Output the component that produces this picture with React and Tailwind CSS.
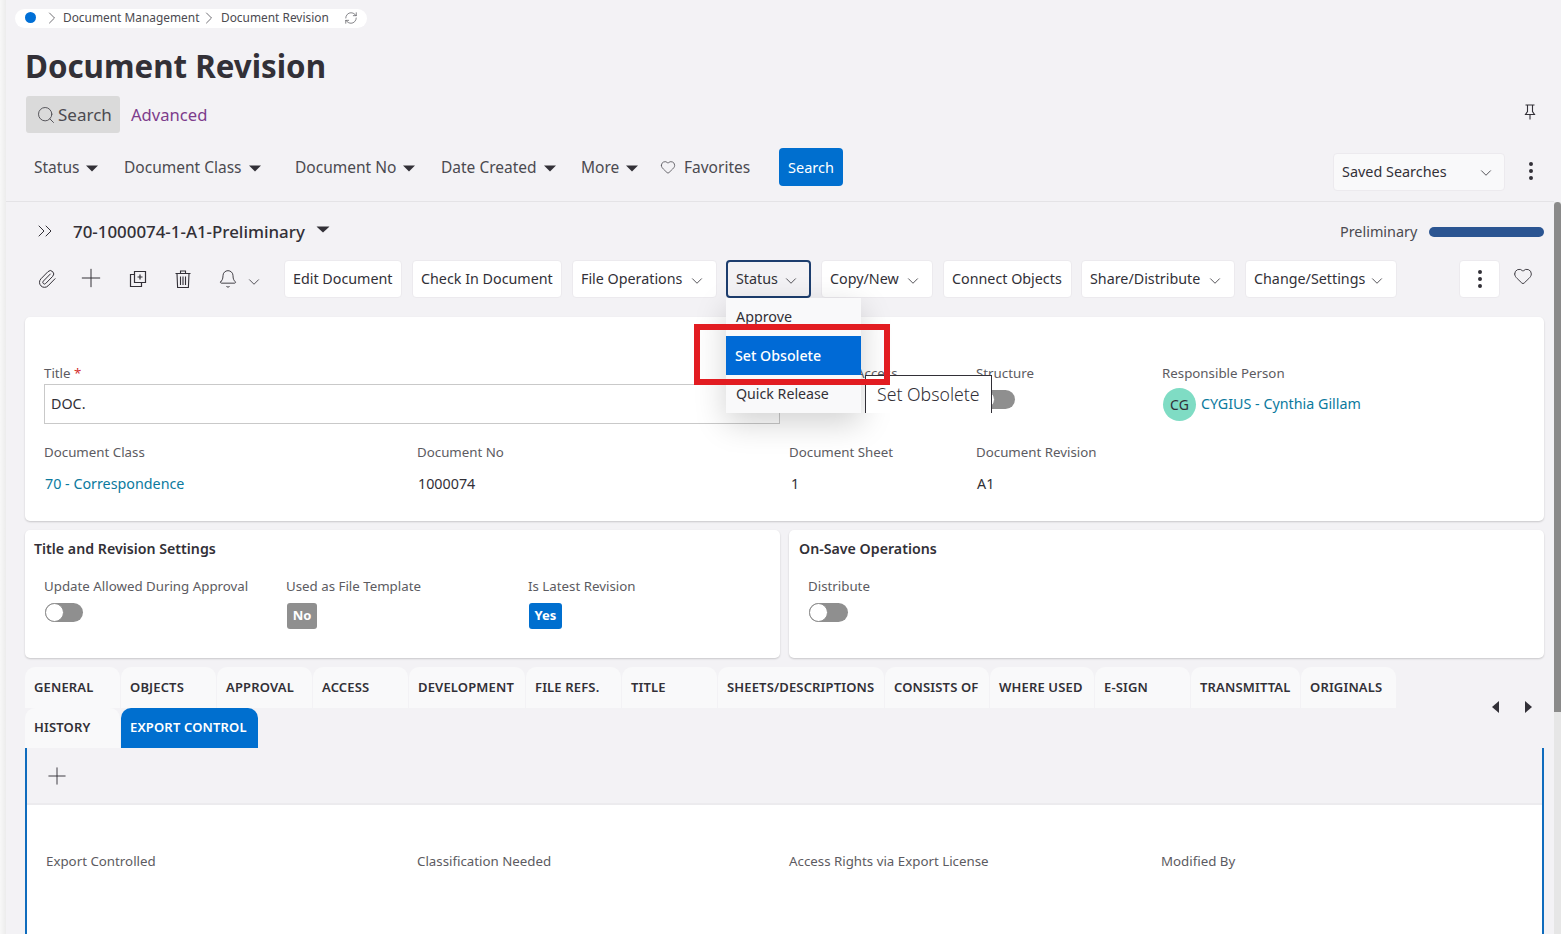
import React from "react";
import { ChevronDown, ChevronRight, Search, Plus, Paperclip, Bell, Heart, RefreshCw, ChevronsRight, MoreVertical } from "lucide-react";

const Caret = ({ className = "" }) => (
  <svg width="12" height="7" viewBox="0 0 12 7" className={className}><path d="M0 0.5h12L6 6.5z" fill="#323037" /></svg>
);

const FilterItem = ({ x, label }) => (
  <div className="absolute top-[157px] h-[22px] flex items-center gap-[7px] text-[15.5px] text-[#4b4a50] whitespace-nowrap" style={{ left: x }}>
    <span>{label}</span><Caret />
  </div>
);

const Btn = ({ x, w, label, chevron, active }) => (
  <div
    className={`absolute top-[260px] h-[38px] rounded-[4px] flex items-center text-[14.3px] text-[#323037] whitespace-nowrap ${active ? "bg-[#f3f2f5] border-2 border-[#1c3d6e] pl-[8px]" : "bg-white border border-[#eceaee] pl-[8px]"}`}
    style={{ left: x, width: w }}
  >
    <span>{label}</span>
    {chevron && <ChevronDown size={18} strokeWidth={1.1} className={`absolute text-[#323037] ${active ? "right-[9px] top-[10px]" : "right-[10px] top-[11px]"}`} />}
  </div>
);

const Label = ({ x, y, children }) => (
  <div className="absolute text-[13.3px] leading-[18px] text-[#5c5b61] whitespace-nowrap" style={{ left: x, top: y }}>{children}</div>
);

const Value = ({ x, y, children, link }) => (
  <div className={`absolute text-[14.3px] leading-[20px] whitespace-nowrap ${link ? "text-[#0b7a9e]" : "text-[#323037]"}`} style={{ left: x, top: y }}>{children}</div>
);

const Toggle = ({ x, y, w = 39 }) => (
  <div className="absolute h-[19px] rounded-full bg-[#8f8f8f]" style={{ left: x, top: y, width: w }}>
    <div className="absolute left-0 top-0 w-[19px] h-[19px] rounded-full bg-white border border-[#8f8f8f]" />
  </div>
);

const tabs1 = [
  [25, 95, "GENERAL"], [121, 95, "OBJECTS"], [217, 95, "APPROVAL"], [313, 95, "ACCESS"], [409, 116, "DEVELOPMENT"],
  [526, 95, "FILE REFS."], [622, 95, "TITLE"], [718, 166, "SHEETS/DESCRIPTIONS"], [885, 104, "CONSISTS OF"],
  [990, 104, "WHERE USED"], [1095, 95, "E-SIGN"], [1191, 109, "TRANSMITTAL"], [1301, 95, "ORIGINALS"],
];

const Tab = ({ x, w, y, h, label, active }) => (
  <div
    className={`absolute pl-[9px] flex items-center rounded-t-[10px] text-[13px] font-semibold tracking-[0.15px] whitespace-nowrap ${active ? "bg-[#006fcf] text-white" : "bg-[#f9f9fa] text-[#323037]"}`}
    style={{ left: x, top: y, width: w, height: h }}
  >{label}</div>
);

export default function App() {
  return (
    <div className="relative w-[1561px] h-[934px] overflow-hidden bg-[#f3f2f5] font-['Open_Sans',sans-serif] text-[#323037]">
      <div className="absolute left-0 top-0 w-[6px] h-full bg-gradient-to-r from-[#f8f8f8] to-[#ececec]" />

      {/* breadcrumb */}
      <div className="absolute left-[15px] top-[9px] w-[352px] h-[19px] rounded-full bg-white" />
      <div className="absolute left-[25px] top-[12px] w-[11px] h-[11px] rounded-full bg-[#006fd6]" />
      <ChevronRight size={20} strokeWidth={1} className="absolute left-[42px] top-[8px] text-[#55545a]" />
      <div className="absolute left-[63px] top-[8px] text-[11.9px] leading-[18px] text-[#4b4a50] whitespace-nowrap">Document Management</div>
      <ChevronRight size={20} strokeWidth={1} className="absolute left-[199px] top-[8px] text-[#55545a]" />
      <div className="absolute left-[221px] top-[8px] text-[11.9px] leading-[18px] text-[#4b4a50] whitespace-nowrap">Document Revision</div>
      <RefreshCw size={14} strokeWidth={1.2} className="absolute left-[344px] top-[11px] text-[#55545a]" />

      <h1 className="absolute left-[25px] top-[46px] text-[31.3px] leading-[40px] font-bold text-[#323037] whitespace-nowrap">Document Revision</h1>

      {/* search switch */}
      <div className="absolute left-[26px] top-[96px] w-[94px] h-[37px] rounded-[3px] bg-[#dadada] flex items-center pl-[10px] gap-[2px] text-[17px] text-[#4b4a50]">
        <Search size={20} strokeWidth={1.1} />
        <span>Search</span>
      </div>
      <div className="absolute left-[131px] top-[103px] text-[16.6px] leading-[23px] text-[#7d3c8c]">Advanced</div>
      <svg width="12" height="16" viewBox="0 0 12 16" fill="none" stroke="#323037" strokeWidth="1.1" className="absolute left-[1524px] top-[104px]">
        <path d="M1.5 1h9M3.5 1v6.5L1.5 10.5h9L8.5 7.5V1M6 10.5V15.5" />
      </svg>

      {/* filters */}
      <FilterItem x={34} label="Status" />
      <FilterItem x={124} label="Document Class" />
      <FilterItem x={295} label="Document No" />
      <FilterItem x={441} label="Date Created" />
      <FilterItem x={581} label="More" />
      <Heart size={16} strokeWidth={1.2} className="absolute left-[660px] top-[159px] text-[#4b4a50]" />
      <div className="absolute left-[684px] top-[156px] text-[15.5px] leading-[22px] text-[#4b4a50]">Favorites</div>
      <div className="absolute left-[779px] top-[148px] w-[64px] h-[38px] rounded-[4px] bg-[#006fcf] text-white text-[14.5px] pt-px flex items-center justify-center">Search</div>

      <div className="absolute left-[1333px] top-[153px] w-[172px] h-[38px] rounded-[4px] bg-[#f9f9fa] border border-[#eceaee] flex items-center pl-[8px] text-[14.4px] text-[#323037]">Saved Searches</div>
      <ChevronDown size={18} strokeWidth={1.1} className="absolute left-[1477px] top-[164px] text-[#323037]" />
      <MoreVertical size={24} strokeWidth={2} className="absolute left-[1519px] top-[159px] text-[#323037]" />

      <div className="absolute left-[6px] top-[201px] w-[1548px] h-px bg-[#e4e3e6]" />

      {/* record header */}
      <ChevronsRight size={24} strokeWidth={1} className="absolute left-[33px] top-[219px] text-[#323037]" />
      <div className="absolute left-[73px] top-[219px] text-[16.9px] leading-[25px] font-medium text-[#323037] whitespace-nowrap">70-1000074-1-A1-Preliminary</div>
      <Caret className="absolute left-[317px] top-[226px] scale-x-110" />
      <div className="absolute left-[1340px] top-[222px] text-[14.4px] leading-[20px] text-[#4b4a50]">Preliminary</div>
      <div className="absolute left-[1429px] top-[227px] w-[115px] h-[10px] rounded-full bg-[#2b5592]" />

      {/* toolbar icons */}
      <Paperclip size={20} strokeWidth={1.2} className="absolute left-[37px] top-[269px] text-[#323037]" />
      <Plus size={30} strokeWidth={0.8} className="absolute left-[76px] top-[263px] text-[#323037]" />
      <svg width="18" height="18" viewBox="0 0 18 18" fill="none" stroke="#323037" strokeWidth="1.2" className="absolute left-[129px] top-[270px]">
        <path d="M5.5 1.5h11v11h-11z" /><path d="M5.5 4.5h-4v12h11v-4" /><path d="M11 4.5v5M8.5 7h5" />
      </svg>
      <svg width="16" height="18" viewBox="0 0 16 18" fill="none" stroke="#323037" strokeWidth="1.1" className="absolute left-[175px] top-[270px]">
        <path d="M0.5 3.5h15M5.5 3.5V1h5v2.5M2 3.5l0.6 14h10.8l0.6-14M5.5 6.5v8.5M8 6.5v8.5M10.5 6.5v8.5" />
      </svg>
      <Bell size={20} strokeWidth={1.1} className="absolute left-[218px] top-[269px] text-[#323037]" />
      <ChevronDown size={18} strokeWidth={1.1} className="absolute left-[245px] top-[273px] text-[#323037]" />

      <Btn x={284} w={118} label="Edit Document" />
      <Btn x={412} w={150} label="Check In Document" />
      <Btn x={572} w={145} label="File Operations" chevron />
      <Btn x={726} w={85} label="Status" chevron active />
      <Btn x={821} w={112} label="Copy/New" chevron />
      <Btn x={943} w={129} label="Connect Objects" />
      <Btn x={1081} w={154} label="Share/Distribute" chevron />
      <Btn x={1245} w={152} label="Change/Settings" chevron />
      <div className="absolute left-[1459px] top-[260px] w-[41px] h-[38px] rounded-[4px] bg-white border border-[#eceaee] flex items-center justify-center">
        <MoreVertical size={24} strokeWidth={2} className="text-[#323037]" />
      </div>
      <Heart size={20} strokeWidth={1.1} className="absolute left-[1513px] top-[266px] text-[#323037]" />

      {/* main card */}
      <div className="absolute left-[25px] top-[317px] w-[1519px] h-[204px] rounded-[5px] bg-white shadow-[0_1px_2px_rgba(0,0,0,0.18)]" />
      <Label x={44} y={364}>Title <span className="text-[#d32f2f]">*</span></Label>
      <div className="absolute left-[44px] top-[384px] w-[736px] h-[40px] border border-[#c9c9c9] flex items-center pl-[6px] pb-px text-[14.3px] text-[#323037]">DOC.</div>
      <Label x={856} y={364}>Access</Label>
      <Label x={976} y={364}>Structure</Label>
      <Toggle x={976} y={390} />
      <Label x={1162} y={364}>Responsible Person</Label>
      <div className="absolute left-[1163px] top-[388px] w-[33px] h-[33px] rounded-full bg-[#7fdcc4] pb-px flex items-center justify-center text-[14px] text-[#323037]">CG</div>
      <Value x={1201} y={394} link>CYGIUS - Cynthia Gillam</Value>

      <Label x={44} y={443}>Document Class</Label>
      <Label x={417} y={443}>Document No</Label>
      <Label x={789} y={443}>Document Sheet</Label>
      <Label x={976} y={443}>Document Revision</Label>
      <Value x={45} y={474} link>70 - Correspondence</Value>
      <Value x={418} y={474}>1000074</Value>
      <Value x={791} y={474}>1</Value>
      <Value x={977} y={474}>A1</Value>

      {/* title settings */}
      <div className="absolute left-[25px] top-[530px] w-[755px] h-[128px] rounded-[5px] bg-white shadow-[0_1px_2px_rgba(0,0,0,0.18)]" />
      <div className="absolute left-[34px] top-[539px] text-[14.2px] leading-[20px] font-semibold text-[#323037]">Title and Revision Settings</div>
      <Label x={44} y={577}>Update Allowed During Approval</Label>
      <Toggle x={45} y={603} w={38} />
      <Label x={286} y={577}>Used as File Template</Label>
      <div className="absolute left-[287px] top-[603px] w-[30px] h-[26px] rounded-[3px] bg-[#8f8f8f] text-white text-[13px] font-bold flex items-center justify-center">No</div>
      <Label x={528} y={577}>Is Latest Revision</Label>
      <div className="absolute left-[529px] top-[603px] w-[33px] h-[26px] rounded-[3px] bg-[#006fcf] text-white text-[13px] font-bold flex items-center justify-center">Yes</div>

      {/* on-save */}
      <div className="absolute left-[789px] top-[530px] w-[755px] h-[128px] rounded-[5px] bg-white shadow-[0_1px_2px_rgba(0,0,0,0.18)]" />
      <div className="absolute left-[799px] top-[539px] text-[14.2px] leading-[20px] font-semibold text-[#323037]">On-Save Operations</div>
      <Label x={808} y={577}>Distribute</Label>
      <Toggle x={809} y={603} />

      {/* tabs */}
      {tabs1.map(([x, w, l]) => <Tab key={l} x={x} w={w} y={667} h={41} label={l} />)}
      <Tab x={25} w={95} y={708} h={40} label="HISTORY" />
      <Tab x={121} w={137} y={708} h={40} label="EXPORT CONTROL" active />
      <svg width="8" height="12" viewBox="0 0 8 12" className="absolute left-[1492px] top-[701px]"><path d="M7 0v12L0 6z" fill="#323037" /></svg>
      <svg width="8" height="12" viewBox="0 0 8 12" className="absolute left-[1524px] top-[701px]"><path d="M1 0v12l7-6z" fill="#323037" /></svg>

      {/* tab panel */}
      <div className="absolute left-[25px] top-[748px] w-[1519px] h-[186px] border-x-2 border-[#0f6cbd]">
        <div className="h-[57px] bg-[#f3f2f5] border-b-2 border-[#ecebee]" />
        <div className="h-[129px] bg-white" />
      </div>
      <Plus size={28} strokeWidth={0.8} className="absolute left-[43px] top-[762px] text-[#323037]" />
      <Label x={46} y={852}>Export Controlled</Label>
      <Label x={417} y={852}>Classification Needed</Label>
      <Label x={789} y={852}>Access Rights via Export License</Label>
      <Label x={1161} y={852}>Modified By</Label>

      {/* scrollbar */}
      <div className="absolute left-[1554px] top-[202px] w-[7px] h-[732px] bg-[#e6e6e6]" />
      <div className="absolute left-[1554px] top-[202px] w-[7px] h-[510px] rounded-t-[4px] bg-[#8a8a8a]" />

      {/* dropdown */}
      <div className="absolute left-[726px] top-[298px] w-[135px] h-[115px] bg-[#f9f9fa] shadow-[0_10px_30px_rgba(0,0,0,0.18)]">
        <div className="h-[38px] pl-[10px] flex items-center text-[14.3px] text-[#323037]">Approve</div>
        <div className="h-[39px] pl-[9px] flex items-center text-[14.2px] font-medium text-white bg-[#006ad6]">Set Obsolete</div>
        <div className="h-[38px] pl-[10px] flex items-center text-[14.2px] text-[#323037]">Quick Release</div>
      </div>

      {/* tooltip */}
      <div className="absolute left-[865px] top-[375px] w-[127px] h-[38px] bg-white border-x border-t border-[#323037] pl-[11px] flex items-center text-[17.7px] font-light text-[#323037] whitespace-nowrap">Set Obsolete</div>

      {/* red highlight */}
      <div className="absolute left-[694px] top-[324px] w-[196px] h-[61px] border-[6px] border-[#e21c21]" />
    </div>
  );
}
